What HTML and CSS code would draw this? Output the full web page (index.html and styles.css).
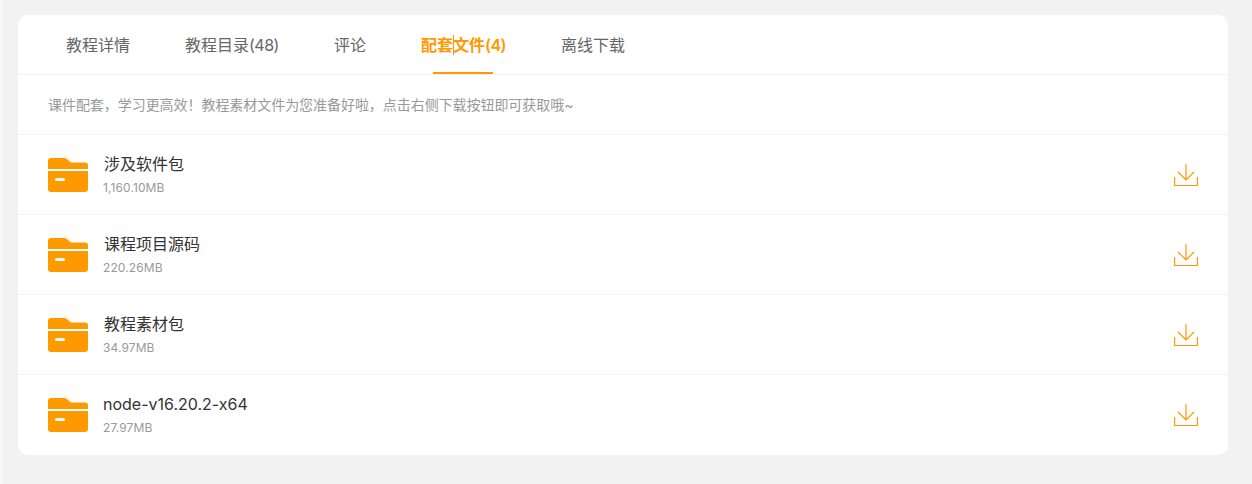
FILE: index.html
```html
<!DOCTYPE html>
<html lang="zh-CN">
<head>
    <meta charset="UTF-8">
    <meta name="viewport" content="width=device-width, initial-scale=1.0">
    <title>配套文件</title>
    <link rel="stylesheet" href="styles.css">
</head>
<body>
    <div class="card">
        <div class="tabs">
            <a class="tab">教程详情</a>
            <a class="tab">教程目录<span class="count">(48)</span></a>
            <a class="tab">评论</a>
            <a class="tab active">配套<i class="caret"></i>文件<span class="count">(4)</span></a>
            <a class="tab">离线下载</a>
        </div>
        <p class="intro">课件配套，学习更高效！教程素材文件为您准备好啦，点击右侧下载按钮即可获取哦~</p>
        <div class="file">
            <svg class="folder" viewBox="0 0 40 34"><path d="M0 11V3a3 3 0 0 1 3-3h13c1.500 0 2.500.6 3.500 1.600L23 4.500h14a3 3 0 0 1 3 3V11zM0 13h40v18a3 3 0 0 1-3 3H3a3 3 0 0 1-3-3zM8.500 20a1.500 1.500 0 0 0 0 3h7a1.500 1.500 0 0 0 0-3z"/></svg>
            <div class="info">
                <div class="name">涉及软件包</div>
                <div class="size">1,160.10MB</div>
            </div>
            <svg class="download" viewBox="0 0 24 22"><path d="M12 0v15.500M4 8l8 8 8-8M.5 13v8.500h23V13"/></svg>
        </div>
        <div class="file">
            <svg class="folder" viewBox="0 0 40 34"><path d="M0 11V3a3 3 0 0 1 3-3h13c1.500 0 2.500.6 3.500 1.600L23 4.500h14a3 3 0 0 1 3 3V11zM0 13h40v18a3 3 0 0 1-3 3H3a3 3 0 0 1-3-3zM8.500 20a1.500 1.500 0 0 0 0 3h7a1.500 1.500 0 0 0 0-3z"/></svg>
            <div class="info">
                <div class="name">课程项目源码</div>
                <div class="size">220.26MB</div>
            </div>
            <svg class="download" viewBox="0 0 24 22"><path d="M12 0v15.500M4 8l8 8 8-8M.5 13v8.500h23V13"/></svg>
        </div>
        <div class="file">
            <svg class="folder" viewBox="0 0 40 34"><path d="M0 11V3a3 3 0 0 1 3-3h13c1.500 0 2.500.6 3.500 1.600L23 4.500h14a3 3 0 0 1 3 3V11zM0 13h40v18a3 3 0 0 1-3 3H3a3 3 0 0 1-3-3zM8.500 20a1.500 1.500 0 0 0 0 3h7a1.500 1.500 0 0 0 0-3z"/></svg>
            <div class="info">
                <div class="name">教程素材包</div>
                <div class="size">34.97MB</div>
            </div>
            <svg class="download" viewBox="0 0 24 22"><path d="M12 0v15.500M4 8l8 8 8-8M.5 13v8.500h23V13"/></svg>
        </div>
        <div class="file">
            <svg class="folder" viewBox="0 0 40 34"><path d="M0 11V3a3 3 0 0 1 3-3h13c1.500 0 2.500.6 3.500 1.600L23 4.500h14a3 3 0 0 1 3 3V11zM0 13h40v18a3 3 0 0 1-3 3H3a3 3 0 0 1-3-3zM8.500 20a1.500 1.500 0 0 0 0 3h7a1.500 1.500 0 0 0 0-3z"/></svg>
            <div class="info">
                <div class="name latin">node-v16.20.2-x64</div>
                <div class="size">27.97MB</div>
            </div>
            <svg class="download" viewBox="0 0 24 22"><path d="M12 0v15.500M4 8l8 8 8-8M.5 13v8.500h23V13"/></svg>
        </div>
    </div>
</body>
</html>
```

FILE: styles.css
```css
body {
    margin: 0;
    padding: 15px 24px 29px 18px;
    background-color: #f2f2f2;
    box-shadow: inset 2px 0 #f8f8f8;
    font-family: Inter, "Noto Sans CJK SC", sans-serif;
    color: #333;
}
.card {
    background: #fff;
    border-radius: 10px;
    overflow: hidden;
}
.tabs {
    display: flex;
    gap: 55px;
    height: 59px;
    padding-left: 48px;
    border-bottom: 1px solid #f2f2f2;
}
.tab {
    position: relative;
    font-size: 16px;
    line-height: 60px;
    color: #666;
    white-space: nowrap;
}
.tab .count {
    letter-spacing: -0.5px;
}
.tab.active {
    color: #ff9900;
    font-weight: 600;
}
.tab.active::after {
    content: "";
    position: absolute;
    left: 12px;
    right: 13px;
    bottom: 0;
    height: 2px;
    background: #ff9900;
}
.caret {
    display: inline-block;
    width: 1px;
    height: 20px;
    margin: 0 -1px 0 0;
    background: #ff9900;
    vertical-align: -4px;
}
.intro {
    margin: 0;
    height: 59px;
    padding-left: 30px;
    font-size: 14px;
    line-height: 59px;
    letter-spacing: -0.05px;
    color: #999;
    border-bottom: 1px solid #f2f2f2;
}
.file {
    display: flex;
    align-items: center;
    height: 79px;
    padding: 0 30px;
    border-bottom: 1px solid #f2f2f2;
}
.file:last-child {
    border-bottom: none;
    height: 80px;
}
.folder {
    width: 40px;
    height: 34px;
    fill: #ff9900;
    fill-rule: evenodd;
}
.info {
    flex: 1;
    margin-left: 16px;
}
.name {
    font-size: 16px;
    line-height: 22px;
    color: #333;
}
.name.latin {
    margin-left: -1px;
}
.size {
    margin-top: 4px;
    margin-left: -1px;
    font-size: 12px;
    line-height: 18px;
    letter-spacing: 0.1px;
    color: #999;
}
.download {
    width: 24px;
    height: 22px;
    fill: none;
    stroke: #ff9900;
    stroke-width: 1.2;
}
```
